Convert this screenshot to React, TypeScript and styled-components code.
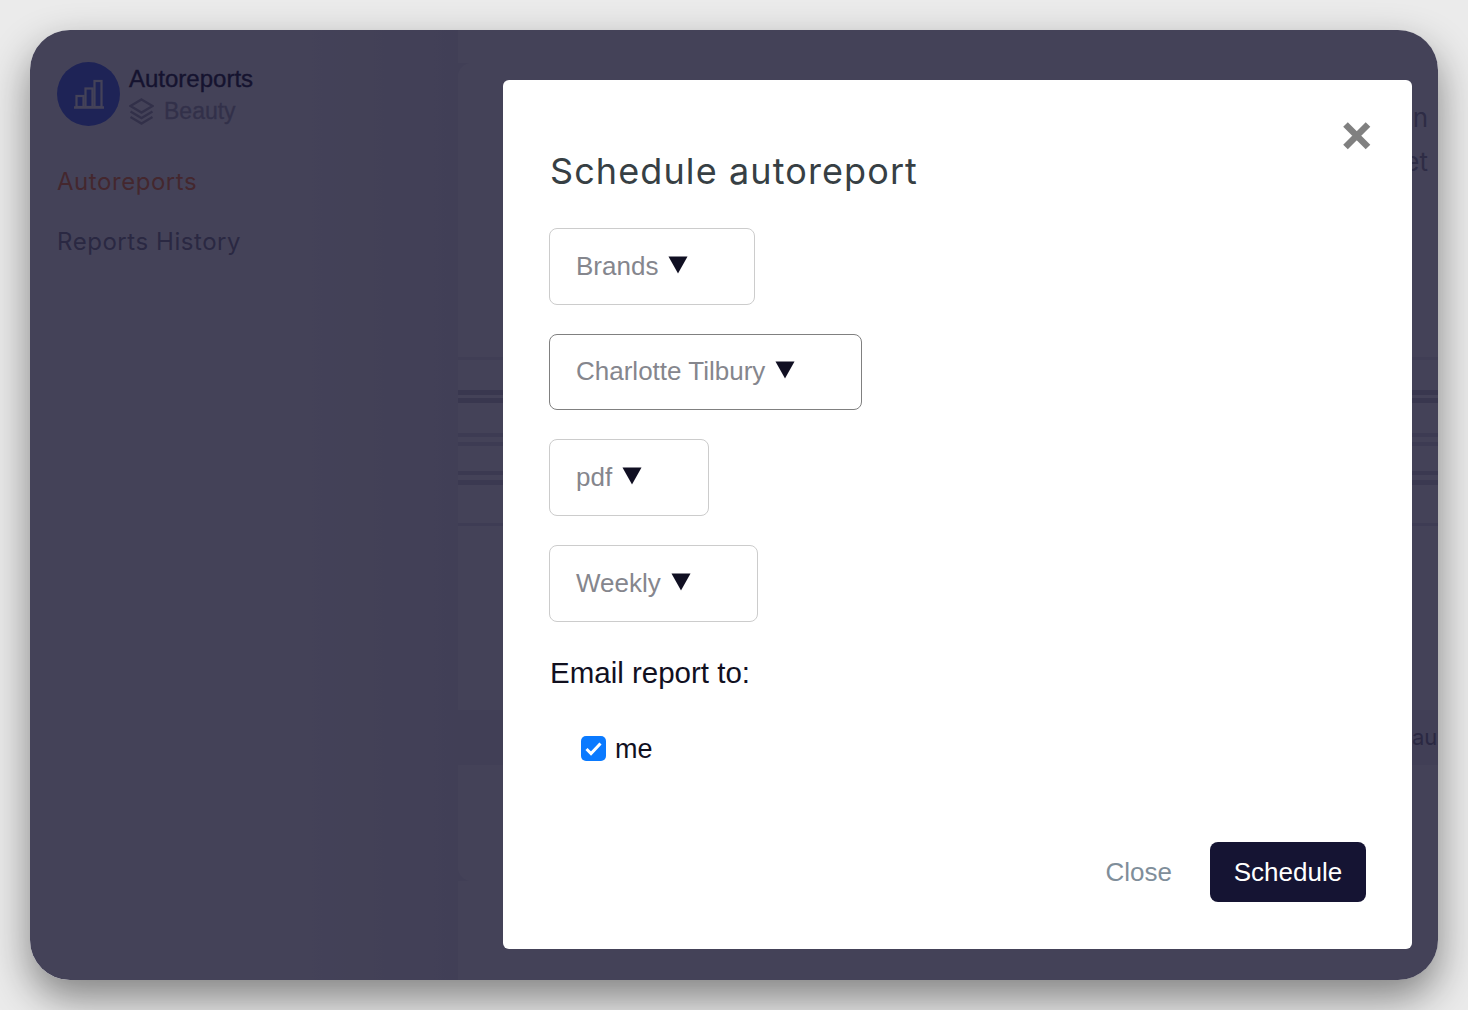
import React from "react";
import styled, { createGlobalStyle } from "styled-components";

const Global = createGlobalStyle`
  html, body { margin: 0; padding: 0; height: 1010px; overflow: hidden; background: #ebebeb; }
  * { box-sizing: border-box; }
  body { font-family: "Liberation Sans", Arial, sans-serif; }
`;

const Page = styled.div`
  width: 1468px;
  height: 1010px;
  padding: 30px;
`;

const AppWindow = styled.div`
  position: relative;
  width: 1408px;
  height: 950px;
  border-radius: 40px;
  background: #fff;
  box-shadow: 0 18px 42px rgba(0, 0, 0, 0.45);
  overflow: hidden;
  display: flex;
`;

const Sidebar = styled.aside`
  width: 428px;
  flex: none;
  padding: 31px 0 0 27px;
  background: linear-gradient(90deg, #fefefe 0 6%, #fefefe 60%, #f0f0f6 100%);
`;

const Brand = styled.div`
  display: flex;
  align-items: center;
  gap: 9px;
`;

const BrandBadge = styled.div`
  width: 63px;
  height: 64px;
  border-radius: 50%;
  background: #4064f4;
  display: flex;
  align-items: center;
  justify-content: center;
  color: #fff;
`;

const BrandText = styled.div`
  display: flex;
  flex-direction: column;
  padding-top: 2px;
`;

const BrandTitle = styled.div`
  font-size: 24px;
  line-height: 32px;
  color: #151433;
  -webkit-text-stroke: 0.4px #151433;
`;

const BrandSub = styled.div`
  display: flex;
  align-items: center;
  gap: 10px;
  font-size: 23px;
  line-height: 32px;
  color: #a5a6b5;
  -webkit-text-stroke: 0.3px #a5a6b5;
`;

const NavList = styled.nav`
  display: flex;
  flex-direction: column;
  gap: 30px;
  margin-top: 40px;
`;

const NavItem = styled.div<{ $active?: boolean }>`
  font-family: Inter, "Liberation Sans", sans-serif;
  font-size: 24px;
  line-height: 30px;
  letter-spacing: 0.55px;
  color: ${(p) => (p.$active ? "#ff7a2e" : "#7f7f92")};
`;

const Main = styled.main`
  width: 980px;
  height: 818px;
  flex: none;
  margin-top: 33px;
  border-radius: 14px 0 0 14px;
  background: #fff;
  display: flex;
  flex-direction: column;
  overflow: hidden;
  box-shadow: 0 0 0 100px #f0f0f6;
  clip-path: inset(0 0 0 0);
`;

const PeekText = styled.div`
  align-self: flex-end;
  padding-right: 10px;
  font-family: Inter, "Liberation Sans", sans-serif;
  font-size: 26px;
  line-height: 34px;
  color: #8f8fa0;
  margin-bottom: 10px;
  &:first-child { margin-top: 38px; }
`;

const Rule = styled.div<{ $h: number; $top: number; $tone: string }>`
  height: ${(p) => p.$h}px;
  margin-top: ${(p) => p.$top}px;
  background: ${(p) => p.$tone};
  flex: none;
`;

const FooterBand = styled.div`
  margin-top: 184px;
  height: 55px;
  flex: none;
  background: #ededf2;
  padding-left: 954px;
  font-family: Inter, "Liberation Sans", sans-serif;
  font-size: 22px;
  line-height: 55px;
  color: #7f7f92;
  white-space: nowrap;
`;

const Backdrop = styled.div`
  position: absolute;
  inset: 0;
  background: rgba(21, 19, 46, 0.8);
`;

const Modal = styled.section`
  position: absolute;
  left: 473px;
  top: 50px;
  width: 909px;
  height: 869px;
  background: #fff;
  border-radius: 6px;
  padding: 68px 46px 47px 46px;
  display: flex;
  flex-direction: column;
  align-items: flex-start;
`;

const CloseIcon = styled.button`
  position: absolute;
  top: 41px;
  right: 40px;
  width: 30px;
  height: 30px;
  padding: 0;
  border: 0;
  background: none;
  color: #808080;
  display: flex;
`;

const Title = styled.h2`
  margin: 0 0 34px 1px;
  font-family: Inter, "Liberation Sans", sans-serif;
  font-weight: 400;
  font-size: 36px;
  line-height: 46px;
  letter-spacing: 1.1px;
  color: #373f44;
`;

const SelectStack = styled.div`
  display: flex;
  flex-direction: column;
  align-items: flex-start;
  gap: 29px;
`;

const SelectBox = styled.div<{ $focus?: boolean }>`
  height: 76.67px;
  display: inline-flex;
  align-items: center;
  gap: 10px;
  padding: 0 66px 0 26px;
  border: 1px solid ${(p) => (p.$focus ? "#808080" : "#cccccc")};
  border-radius: 8px;
  font-size: 26px;
  color: #85868d;
`;

const Caret = styled.svg`
  width: 20px;
  height: 18px;
  margin-top: -3px;
  flex: none;
  color: #100f22;
`;

const EmailLabel = styled.div`
  margin: 34px 0 0 1px;
  font-size: 29.5px;
  line-height: 34px;
  color: #11101f;
`;

const CheckRow = styled.label`
  display: flex;
  align-items: center;
  gap: 9px;
  margin: 43px 0 0 32px;
  font-size: 27px;
  line-height: 32px;
  color: #11101f;
`;

const CheckBox = styled.span`
  width: 25px;
  height: 25px;
  border-radius: 5px;
  background: #0a7aff;
  display: flex;
  align-items: center;
  justify-content: center;
`;

const Footer = styled.footer`
  margin-top: auto;
  align-self: flex-end;
  display: flex;
  align-items: center;
  gap: 38px;
`;

const GhostButton = styled.button`
  padding: 0;
  border: 0;
  background: none;
  font: inherit;
  font-size: 26px;
  color: #7f8e9a;
`;

const PrimaryButton = styled.button`
  width: 156px;
  height: 60px;
  padding: 0;
  border: 0;
  border-radius: 8px;
  background: #151433;
  color: #fff;
  font: inherit;
  font-size: 26px;
`;

const CaretIcon = () => (
  <Caret viewBox="0 0 20 18">
    <path d="M0.5 0.5H19.5L10 17.5Z" fill="currentColor" />
  </Caret>
);

const Select = ({ label, focus }: { label: string; focus?: boolean }) => (
  <SelectBox $focus={focus}>
    {label}
    <CaretIcon />
  </SelectBox>
);

export default function App() {
  return (
    <Page>
      <Global />
      <AppWindow>
        <Sidebar>
          <Brand>
            <BrandBadge>
              <svg width="32" height="30" viewBox="0 0 32 30" fill="none" stroke="currentColor" strokeWidth="2.2">
                <path d="M1 28.5H31" strokeWidth="2.4" />
                <rect x="3.5" y="17" width="7" height="11" />
                <rect x="12.5" y="9.5" width="7" height="18.5" />
                <rect x="21.5" y="2" width="7" height="26" />
              </svg>
            </BrandBadge>
            <BrandText>
              <BrandTitle>Autoreports</BrandTitle>
              <BrandSub>
                <svg width="25" height="27" viewBox="0 0 25 27" fill="none" stroke="currentColor" strokeWidth="2.4" strokeLinejoin="miter">
                  <path d="M12.5 1.5L23.5 8L12.5 14.5L1.5 8Z" />
                  <path d="M1.5 13.5L12.5 20L23.5 13.5" />
                  <path d="M1.5 19L12.5 25.5L23.5 19" />
                </svg>
                Beauty
              </BrandSub>
            </BrandText>
          </Brand>
          <NavList>
            <NavItem $active>Autoreports</NavItem>
            <NavItem>Reports History</NavItem>
          </NavList>
        </Sidebar>
        <Main>
          <PeekText>n</PeekText>
          <PeekText>et</PeekText>
          <Rule $h={3} $top={168} $tone="#ebebf0" />
          <Rule $h={5} $top={30} $tone="#c5c5d0" />
          <Rule $h={5} $top={3} $tone="#c5c5d0" />
          <Rule $h={4} $top={30} $tone="#dcdce4" />
          <Rule $h={4} $top={5} $tone="#dcdce4" />
          <Rule $h={4} $top={25} $tone="#d2d2dc" />
          <Rule $h={5} $top={5} $tone="#d2d2dc" />
          <Rule $h={3} $top={38} $tone="#e2e2ea" />
          <FooterBand>au</FooterBand>
        </Main>
        <Backdrop />
        <Modal>
          <CloseIcon aria-label="Close">
            <svg width="30" height="30" viewBox="0 0 30 30" fill="none" stroke="currentColor" strokeWidth="6.5">
              <path d="M3.5 3.5L26 26M26 3.5L3.5 26" />
            </svg>
          </CloseIcon>
          <Title>Schedule autoreport</Title>
          <SelectStack>
            <Select label="Brands" />
            <Select label="Charlotte Tilbury" focus />
            <Select label="pdf" />
            <Select label="Weekly" />
          </SelectStack>
          <EmailLabel>Email report to:</EmailLabel>
          <CheckRow>
            <CheckBox>
              <svg width="17" height="14" viewBox="0 0 17 14" fill="none" stroke="#fff" strokeWidth="3">
                <path d="M1.5 7L6 11.5L15.5 1.5" />
              </svg>
            </CheckBox>
            me
          </CheckRow>
          <Footer>
            <GhostButton>Close</GhostButton>
            <PrimaryButton>Schedule</PrimaryButton>
          </Footer>
        </Modal>
      </AppWindow>
    </Page>
  );
}
